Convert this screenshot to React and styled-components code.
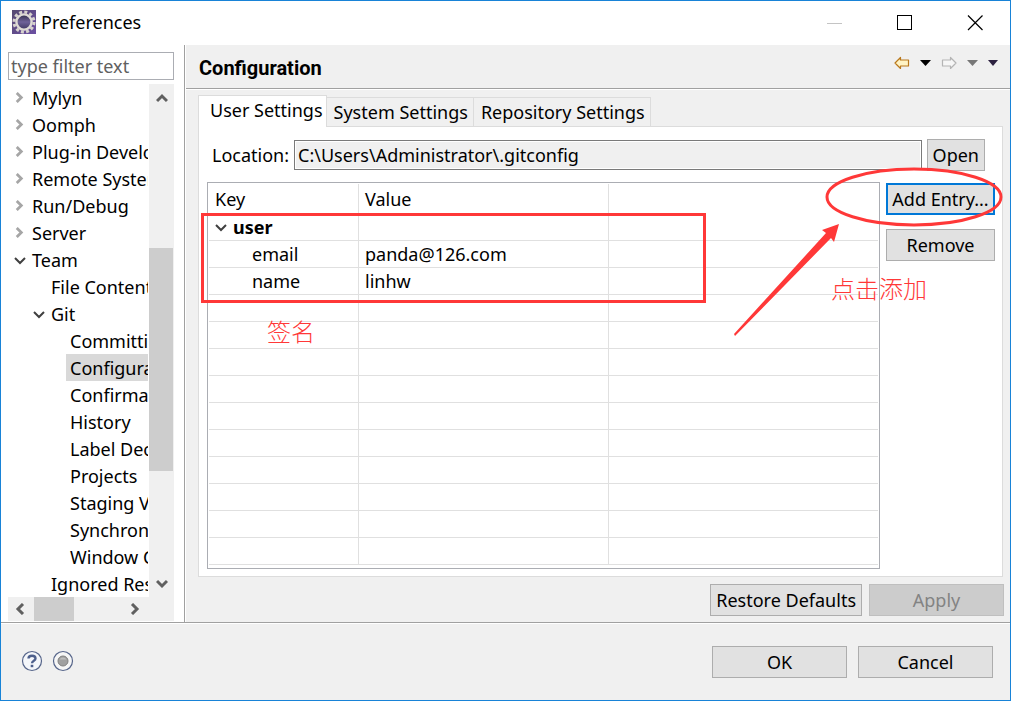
import React, { useState } from "react";
import styled, { createGlobalStyle, css } from "styled-components";

const treeItems = [
  { label: "Mylyn", depth: 0, state: "closed" },
  { label: "Oomph", depth: 0, state: "closed" },
  { label: "Plug-in Development", depth: 0, state: "closed" },
  { label: "Remote Systems", depth: 0, state: "closed" },
  { label: "Run/Debug", depth: 0, state: "closed" },
  { label: "Server", depth: 0, state: "closed" },
  { label: "Team", depth: 0, state: "open" },
  { label: "File Content", depth: 1 },
  { label: "Git", depth: 1, state: "open" },
  { label: "Committing", depth: 2 },
  { label: "Configuration", depth: 2 },
  { label: "Confirmations", depth: 2 },
  { label: "History", depth: 2 },
  { label: "Label Decorations", depth: 2 },
  { label: "Projects", depth: 2 },
  { label: "Staging View", depth: 2 },
  { label: "Synchronize", depth: 2 },
  { label: "Window Cache", depth: 2 },
  { label: "Ignored Resources", depth: 1 },
];

const tabs = ["User Settings", "System Settings", "Repository Settings"];

const entries = [
  { key: "email", value: "panda@126.com" },
  { key: "name", value: "linhw" },
];

const emptyRows = Array.from({ length: 10 });

const chevrons = {
  right: "M3 1 L8 6 L3 11",
  left: "M9 1 L4 6 L9 11",
  up: "M1 9 L6 4 L11 9",
  down: "M1 4 L6 9 L11 4",
};

function Chevron({ dir, size = 12, color = "#606060", weight = 3 }) {
  return (
    <svg width={size} height={size} viewBox="0 0 12 12" aria-hidden="true">
      <path d={chevrons[dir]} fill="none" stroke={color} strokeWidth={weight} />
    </svg>
  );
}

function AppIcon() {
  return (
    <svg width="24" height="24" viewBox="0 0 24 24" aria-hidden="true">
      <defs>
        <linearGradient id="purple" x1="0" y1="0" x2="1" y2="1">
          <stop offset="0" stopColor="#564a70" />
          <stop offset="1" stopColor="#6c4fa3" />
        </linearGradient>
        <linearGradient id="hole" x1="0" y1="0" x2="0" y2="1">
          <stop offset="0" stopColor="#2f2c48" />
          <stop offset="0.5" stopColor="#6f6299" />
          <stop offset="1" stopColor="#3e3660" />
        </linearGradient>
      </defs>
      <rect width="24" height="24" fill="url(#purple)" />
      <circle cx="12" cy="12" r="10" fill="none" stroke="#d6d2cd" strokeWidth="3" strokeDasharray="3 2.236" />
      <circle cx="12" cy="12" r="7.6" fill="url(#hole)" stroke="#dedad5" strokeWidth="2.4" />
    </svg>
  );
}

function HistoryArrow({ forward }) {
  return (
    <svg width="16" height="14" viewBox="0 0 16 14" aria-hidden="true">
      <path
        d={forward ? "M15 7 L9.5 1.5 V4 H1.5 V10 H9.5 V12.5 Z" : "M1 7 L6.5 1.5 V4 H14.5 V10 H6.5 V12.5 Z"}
        fill={forward ? "#f6f6f6" : "#fff3c4"}
        stroke={forward ? "#b4b4b4" : "#b9781c"}
        strokeWidth="1.2"
        strokeLinejoin="round"
      />
    </svg>
  );
}

function Caret({ width = 11, color }) {
  return (
    <svg width={width} height="6" viewBox="0 0 11 6" preserveAspectRatio="none" aria-hidden="true">
      <path d="M0 0 H11 L5.5 6 Z" fill={color} />
    </svg>
  );
}

export default function App() {
  const [selected, setSelected] = useState("Configuration");
  const [activeTab, setActiveTab] = useState("User Settings");
  const [filter, setFilter] = useState("");

  return (
    <Window>
      <GlobalStyle />
      <TitleBar>
        <Brand>
          <AppIcon />
          <span>Preferences</span>
        </Brand>
        <WindowButtons>
          <WindowButton aria-label="Minimize" disabled>
            <svg width="16" height="16"><path d="M0 8.5H15" stroke="#c4c4c4" /></svg>
          </WindowButton>
          <WindowButton aria-label="Maximize">
            <svg width="16" height="16"><rect x="0.5" y="0.5" width="14" height="14" fill="none" stroke="#000" /></svg>
          </WindowButton>
          <WindowButton aria-label="Close">
            <svg width="16" height="16"><path d="M1 0.5L15.5 15M15.5 0.5L1 15" stroke="#000" strokeWidth="1.2" /></svg>
          </WindowButton>
        </WindowButtons>
      </TitleBar>

      <Body>
        <Sidebar>
          <FilterInput
            type="text"
            aria-label="Filter"
            placeholder="type filter text"
            value={filter}
            onChange={({ target }) => setFilter(target.value)}
          />
          <TreeArea>
            <Tree>
              {treeItems.map(({ label, depth, state }) => (
                <TreeRow key={label} $depth={depth}>
                  <Twisty>
                    {state === "closed" && <Chevron dir="right" size={11} color="#a6a6a6" />}
                    {state === "open" && <Chevron dir="down" color="#404040" weight={2} />}
                  </Twisty>
                  <TreeLabel $selected={selected === label} onClick={() => setSelected(label)}>
                    {label}
                  </TreeLabel>
                </TreeRow>
              ))}
            </Tree>
            <VerticalBar>
              <Chevron dir="up" />
              <VerticalThumb />
              <Chevron dir="down" />
            </VerticalBar>
            <HorizontalBar>
              <Chevron dir="left" />
              <HorizontalThumb />
              <Chevron dir="right" />
            </HorizontalBar>
            <Corner />
          </TreeArea>
        </Sidebar>

        <Page>
          <PageHeader>
            <PageTitle>Configuration</PageTitle>
            <Toolbar>
              <ToolButton aria-label="Back"><HistoryArrow /></ToolButton>
              <ToolButton aria-label="Back history"><Caret color="#000" /></ToolButton>
              <ToolButton aria-label="Forward" disabled><HistoryArrow forward /></ToolButton>
              <ToolButton aria-label="Forward history" disabled><Caret color="#777" /></ToolButton>
              <ToolButton aria-label="Menu"><Caret width={10} color="#2c2140" /></ToolButton>
            </Toolbar>
          </PageHeader>

          <PageContent>
            <TabList role="tablist">
              {tabs.map((tab) => (
                <Tab
                  key={tab}
                  role="tab"
                  aria-selected={activeTab === tab}
                  $active={activeTab === tab}
                  onClick={() => setActiveTab(tab)}
                >
                  {tab}
                </Tab>
              ))}
            </TabList>

            <TabPanel role="tabpanel">
              <LocationRow>
                <label htmlFor="location">Location:</label>
                <LocationInput id="location" type="text" readOnly value="C:\Users\Administrator\.gitconfig" />
                <Button>Open</Button>
              </LocationRow>
              <Settings>
                <TableBox>
                  <Table>
                    <colgroup>
                      <KeyCol />
                      <ValueCol />
                      <col />
                    </colgroup>
                    <thead>
                      <tr>
                        <th>Key</th>
                        <th>Value</th>
                        <th />
                      </tr>
                    </thead>
                    <tbody>
                      <tr>
                        <td>
                          <Group>
                            <Chevron dir="down" color="#404040" weight={2} />
                            user
                          </Group>
                        </td>
                        <td />
                        <td />
                      </tr>
                      {entries.map(({ key, value }) => (
                        <tr key={key}>
                          <EntryKey>{key}</EntryKey>
                          <td>{value}</td>
                          <td />
                        </tr>
                      ))}
                      {emptyRows.map((_, index) => (
                        <tr key={index}>
                          <td />
                          <td />
                          <td />
                        </tr>
                      ))}
                    </tbody>
                  </Table>
                  <EntriesFrame />
                  <SignatureNote>签名</SignatureNote>
                </TableBox>
                <Actions>
                  <Button $focused>Add Entry...</Button>
                  <Button>Remove</Button>
                  <Pointer width="274" height="172" viewBox="0 0 274 172" aria-hidden="true">
                    <ellipse cx="183" cy="31" rx="87" ry="28" fill="none" stroke="#ff3838" strokeWidth="3" />
                    <path d="M108 58 L91 64 L95 67 L3 168 L4 170 L100 72 L103 76 Z" fill="#ff3838" />
                  </Pointer>
                  <AddNote>点击添加</AddNote>
                </Actions>
              </Settings>
            </TabPanel>

            <PageButtons>
              <Button>Restore Defaults</Button>
              <Button $wide disabled>Apply</Button>
            </PageButtons>
          </PageContent>
        </Page>
      </Body>

      <Footer>
        <RoundButton aria-label="Help">
          <svg width="22" height="22" viewBox="0 0 22 22">
            <circle cx="11" cy="11" r="9.5" fill="#f4f6fa" stroke="#56658a" strokeWidth="1.2" />
            <path d="M7.5 8.5C7.5 4.8 14.5 4.8 14.5 8.5C14.5 10.8 11 10.6 11 13.2" fill="none" stroke="#4d5f8c" strokeWidth="2.4" />
            <rect x="9.7" y="14.8" width="2.6" height="2.4" fill="#4d5f8c" />
          </svg>
        </RoundButton>
        <RoundButton aria-label="Record preferences">
          <svg width="22" height="22" viewBox="0 0 22 22">
            <circle cx="11" cy="11" r="9.5" fill="#f6f6f6" stroke="#56658a" strokeWidth="1.2" />
            <circle cx="11" cy="11" r="5" fill="#a0a0a0" stroke="#808080" />
            <path d="M7.5 9.5A4 4 0 0 1 14.5 9.5Z" fill="#bdbdbd" />
          </svg>
        </RoundButton>
        <DialogButtons>
          <Button $wide>OK</Button>
          <Button $wide>Cancel</Button>
        </DialogButtons>
      </Footer>
    </Window>
  );
}

const GlobalStyle = createGlobalStyle`
  * {
    box-sizing: border-box;
  }

  body {
    margin: 0;
    color: #000;
    font-family: "Noto Sans", "Open Sans", "Noto Sans CJK SC", sans-serif;
    font-size: 18px;
    line-height: 26px;
  }

  button,
  input {
    font: inherit;
    color: inherit;
  }

  svg {
    display: block;
    flex: none;
  }
`;

const Window = styled.div`
  display: flex;
  flex-direction: column;
  min-height: 100vh;
  border: 1px solid #1883d7;
  background: #fff;
`;

const TitleBar = styled.header`
  display: flex;
  align-items: center;
  height: 44px;
`;

const Brand = styled.div`
  display: flex;
  align-items: center;
  gap: 5px;
  padding: 0 0 2px 11px;
`;

const WindowButtons = styled.div`
  display: flex;
  margin-left: auto;
`;

const WindowButton = styled.button`
  display: flex;
  align-items: center;
  justify-content: center;
  width: 70px;
  height: 44px;
  padding: 0;
  border: none;
  background: none;
`;

const Body = styled.div`
  display: flex;
  flex: 1;
  border-bottom: 1px solid #a0a0a0;
`;

const Sidebar = styled.aside`
  display: flex;
  flex-direction: column;
  flex: none;
  width: 184px;
  padding: 7px 10px 1px 7px;
  border-right: 1px solid #a0a0a0;
`;

const FilterInput = styled.input`
  width: 100%;
  height: 28px;
  margin-bottom: 4px;
  padding: 0 2px;
  border: 1px solid #abadb3;
  background: #fff;
  outline: none;

  &::placeholder {
    color: #606060;
    opacity: 1;
  }
`;

const TreeArea = styled.div`
  display: grid;
  flex: 1;
  grid-template-columns: minmax(0, 1fr) 25px;
  grid-template-rows: 1fr 24px;
`;

const Tree = styled.ul`
  margin: 0 1px 0 0;
  padding: 0;
  overflow: hidden;
  list-style: none;
`;

const TreeRow = styled.li`
  display: flex;
  height: 27px;
  padding-left: ${({ $depth }) => $depth * 19 + 6}px;
`;

const Twisty = styled.span`
  display: flex;
  flex: none;
  align-items: center;
  width: 14px;
`;

const TreeLabel = styled.button`
  flex: none;
  padding: 0 4px;
  border: none;
  background: ${({ $selected }) => ($selected ? "#d9d9d9" : "none")};
  white-space: nowrap;
`;

const VerticalBar = styled.div`
  display: flex;
  flex-direction: column;
  align-items: center;
  justify-content: space-between;
  padding: 8px 0;
  background: #f0f0f0;
`;

const VerticalThumb = styled.div`
  width: 24px;
  height: 223px;
  margin: 144px 1px auto 0;
  background: #cdcdcd;
`;

const HorizontalBar = styled.div`
  display: flex;
  align-items: center;
  padding: 0 8px 0 6px;
  background: #f0f0f0;

  svg:last-child {
    margin-left: auto;
  }
`;

const HorizontalThumb = styled.div`
  width: 40px;
  height: 24px;
  margin-left: 8px;
  background: #cdcdcd;
`;

const Corner = styled.div`
  background: #f0f0f0;
`;

const Page = styled.main`
  display: flex;
  flex: 1;
  flex-direction: column;
  min-width: 0;
  border-left: 1px solid #fff;
  background: #f0f0f0;
`;

const PageHeader = styled.div`
  display: flex;
  align-items: center;
  height: 44px;
  padding: 0 12px 0 13px;
  border-bottom: 1px solid #a0a0a0;
  box-shadow: 0 1px 0 #fff;
`;

const PageTitle = styled.h1`
  margin: 2px 0 0;
  font-family: Roboto, sans-serif;
  font-size: 20px;
  font-weight: 700;
`;

const Toolbar = styled.div`
  display: flex;
  align-items: center;
  gap: 10px;
  margin: 0 0 8px auto;
`;

const ToolButton = styled.button`
  padding: 0;
  border: none;
  background: none;
`;

const PageContent = styled.div`
  display: flex;
  flex: 1;
  flex-direction: column;
  padding: 6px 6px 6px 12px;
`;

const TabList = styled.div`
  display: flex;
  align-items: flex-end;
  height: 31px;
`;

const Tab = styled.button`
  height: 29px;
  padding: 0 5px 0 7px;
  border: 1px solid #dcdcdc;
  border-width: 1px 1px 0 0;
  background: #f0f0f0;
  white-space: nowrap;

  ${({ $active }) =>
    $active &&
    css`
      z-index: 1;
      height: 32px;
      margin-bottom: -1px;
      padding: 0 3px 3px 11px;
      border-left-width: 1px;
      background: #fff;
    `}
`;

const TabPanel = styled.section`
  display: flex;
  flex: 1;
  flex-direction: column;
  margin-right: 1px;
  padding: 12px 7px 7px 8px;
  border: 1px solid #dcdcdc;
  background: #fff;
`;

const Button = styled.button`
  height: 32px;
  width: ${({ $wide }) => ($wide ? "135px" : "auto")};
  padding: 0 5px;
  border: 1px solid #adadad;
  background: #e1e1e1;
  white-space: nowrap;

  &:disabled {
    border-color: #bfbfbf;
    background: #ccc;
    color: #838383;
  }

  ${({ $focused }) =>
    $focused &&
    css`
      padding: 0 3px;
      border: 2px solid #0078d7;
    `}
`;

const LocationRow = styled.div`
  display: flex;
  align-items: center;
  gap: 5px;
  padding: 0 10px 0 5px;
`;

const LocationInput = styled.input`
  flex: 1;
  min-width: 0;
  height: 30px;
  padding: 0 3px;
  border: 1px solid #7a7a7a;
  background: #f0f0f0;
  box-shadow: inset 0 0 0 1px #fff;
  outline: none;
`;

const Settings = styled.div`
  display: flex;
  flex: 1;
  gap: 6px;
  margin-top: 11px;
`;

const TableBox = styled.div`
  position: relative;
  flex: 1;
  padding: 1px;
  border: 1px solid #abadb3;
`;

const Table = styled.table`
  width: 100%;
  border-spacing: 0;
  table-layout: fixed;

  th,
  td {
    height: 27px;
    padding: 0 6px;
    border-right: 1px solid #e0e0e0;
    font-weight: 400;
    text-align: left;
  }

  th {
    height: 30px;
  }

  td {
    border-bottom: 1px solid #e0e0e0;
  }

  th:last-child,
  td:last-child {
    border-right: none;
  }
`;

const KeyCol = styled.col`
  width: 150px;
`;

const ValueCol = styled.col`
  width: 250px;
`;

const Group = styled.span`
  display: flex;
  align-items: center;
  gap: 6px;
  font-weight: 700;
`;

const EntryKey = styled.td`
  && {
    padding-left: 43px;
  }
`;

const Actions = styled.div`
  position: relative;
  display: flex;
  flex-direction: column;
  gap: 14px;
  width: 109px;
  padding-top: 1px;
`;

const noteText = css`
  position: absolute;
  color: #ff3838;
  font-family: "Noto Sans CJK SC", sans-serif;
  font-size: 24px;
  font-weight: 300;
  white-space: nowrap;
`;

const EntriesFrame = styled.div`
  position: absolute;
  top: 30px;
  left: -7px;
  width: 505px;
  height: 90px;
  border: 3px solid #ff3838;
`;

const SignatureNote = styled.span`
  ${noteText}
  top: 135px;
  left: 59px;
`;

const AddNote = styled.span`
  ${noteText}
  top: 93px;
  left: -55px;
`;

const Pointer = styled.svg`
  position: absolute;
  top: -16px;
  left: -155px;
  pointer-events: none;
`;

const PageButtons = styled.div`
  display: flex;
  justify-content: flex-end;
  gap: 7px;
  margin-top: 7px;
`;

const Footer = styled.footer`
  display: flex;
  align-items: center;
  gap: 9px;
  height: 77px;
  padding: 0 17px 0 20px;
  border-top: 1px solid #fff;
  background: #f0f0f0;
`;

const RoundButton = styled.button`
  padding: 0 0 2px;
  border: none;
  background: none;
`;

const DialogButtons = styled.div`
  display: flex;
  gap: 11px;
  margin-left: auto;
`;
